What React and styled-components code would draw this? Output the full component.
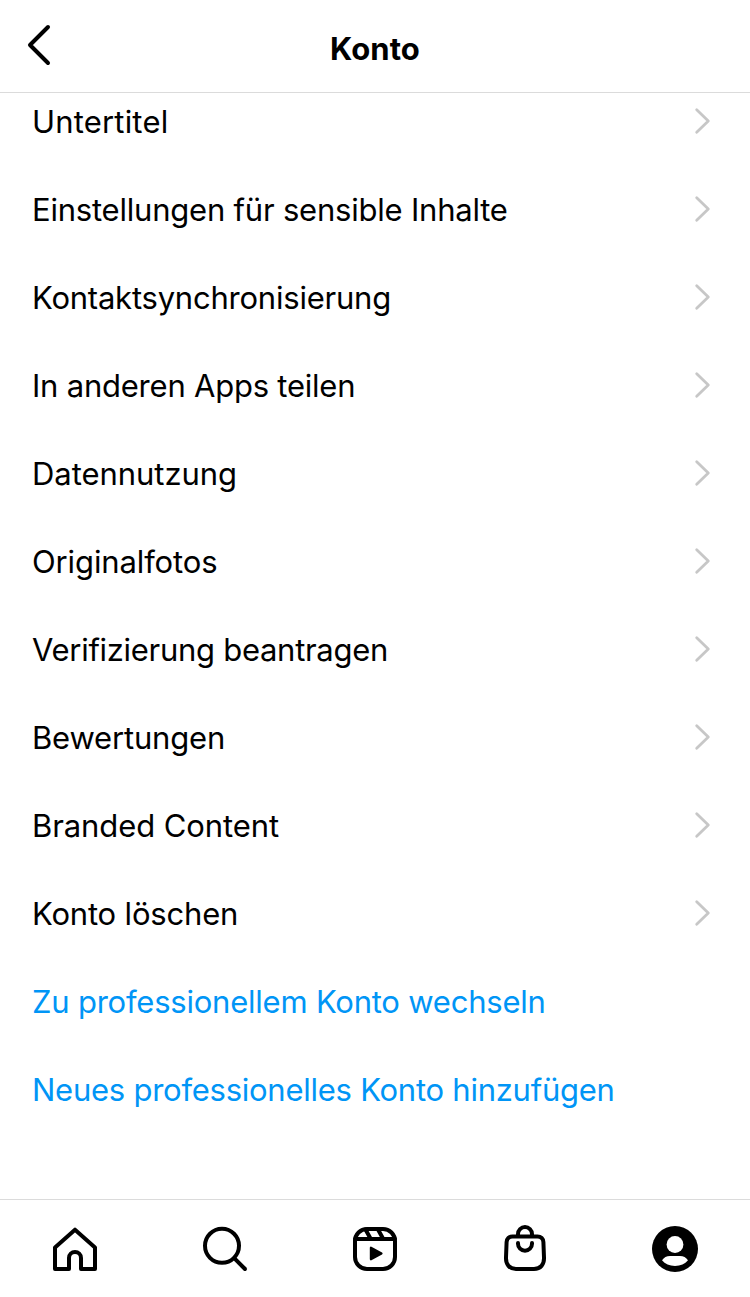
import React from 'react';
import styled, { createGlobalStyle } from 'styled-components';

const GlobalStyle = createGlobalStyle`
  body {
    margin: 0;
    background: #fff;
    color: #000;
    font-family: Inter, "Liberation Sans", sans-serif;
  }
`;

const Screen = styled.div`
  display: flex;
  flex-direction: column;
  height: 1297px;
  overflow: hidden;
  background: #fff;
`;

const Header = styled.header`
  display: grid;
  grid-template-columns: 80px 1fr 80px;
  flex: none;
  box-sizing: border-box;
  height: 93px;
  border-bottom: 1px solid #dbdbdb;
`;

const BackButton = styled.button`
  display: flex;
  align-items: flex-start;
  padding: 24px 0 0 27px;
  border: none;
  background: none;
  cursor: pointer;
`;

const Title = styled.h1`
  margin: 0;
  padding-top: 5px;
  font-size: 31px;
  font-weight: 700;
  line-height: 88px;
  letter-spacing: 0.1px;
  text-align: center;
`;

const Content = styled.main`
  flex: 1;
  min-height: 0;
  overflow: hidden;
`;

const List = styled.ul`
  margin: -16px 0 0;
  padding: 0;
  list-style: none;
`;

const Row = styled.li`
  display: flex;
  align-items: center;
  justify-content: space-between;
  box-sizing: border-box;
  height: 88px;
  padding: 0 39px 0 32px;
  color: ${(props) => (props.$link ? '#0095f6' : '#000')};
  cursor: pointer;
`;

const Label = styled.span`
  padding-top: 1px;
  font-size: 31px;
  line-height: 40px;
  letter-spacing: ${(props) => props.$spacing}px;
  white-space: nowrap;
`;

const TabBar = styled.nav`
  display: grid;
  grid-template-columns: repeat(5, 1fr);
  flex: none;
  box-sizing: border-box;
  height: 98px;
  border-top: 1px solid #dbdbdb;
`;

const Tab = styled.button`
  display: flex;
  justify-content: center;
  align-items: flex-start;
  padding: 25px 0 0;
  border: none;
  background: none;
  color: #000;
  cursor: pointer;
`;

const Icon = styled.svg`
  display: block;
  overflow: visible;
  fill: none;
  stroke: currentColor;
  stroke-width: 4;
  stroke-linecap: round;
  stroke-linejoin: round;
`;

const Chevron = styled(Icon)`
  stroke: #c7c7c7;
  stroke-width: 2.8;
`;

const items = [
  { label: 'Untertitel', spacing: 0.18 },
  { label: 'Einstellungen für sensible Inhalte', spacing: -0.21 },
  { label: 'Kontaktsynchronisierung', spacing: -0.22 },
  { label: 'In anderen Apps teilen', spacing: -0.22 },
  { label: 'Datennutzung', spacing: -0.05 },
  { label: 'Originalfotos', spacing: -0.12 },
  { label: 'Verifizierung beantragen', spacing: -0.29 },
  { label: 'Bewertungen', spacing: -0.18 },
  { label: 'Branded Content', spacing: -0.08 },
  { label: 'Konto löschen', spacing: -0.18 },
  { label: 'Zu professionellem Konto wechseln', spacing: -0.22, link: true },
  { label: 'Neues professionelles Konto hinzufügen', spacing: -0.25, link: true },
];

const HomeIcon = () => (
  <Icon width="48" height="48" viewBox="0 0 48 48">
    <path d="M4 44V22.5L24 4.7l20 17.8V44H30V33a6 6 0 0 0-12 0v11z" />
  </Icon>
);

const SearchIcon = () => (
  <Icon width="48" height="48" viewBox="0 0 48 48">
    <circle cx="21" cy="20.8" r="17" />
    <path d="M33.2 33.2 44 44" />
  </Icon>
);

const ReelsIcon = () => (
  <Icon width="48" height="48" viewBox="0 0 48 48">
    <rect x="4" y="4" width="40" height="40" rx="12" />
    <path d="M4 14h40M14.5 4.5l5 9M27 4.5l5 9" />
    <path d="M19.9 22.7v11.6l10.6-5.8z" fill="currentColor" strokeWidth="2.2" />
  </Icon>
);

const ShopIcon = () => (
  <Icon width="48" height="48" viewBox="0 0 48 48">
    <path d="M11.5 11.5h25c3.5 0 5.7 2.2 5.9 5.5l.6 15.5C43.3 39.5 39.5 44 33 44H15C8.5 44 4.7 39.5 5 32.5L5.6 17c.2-3.3 2.4-5.5 5.9-5.5z" />
    <path d="M17 10.5V9a7 7 0 0 1 14 0v1.5M17 18v.7a7 7 0 0 0 14 0V18" />
  </Icon>
);

const ProfileIcon = () => (
  <Icon width="48" height="48" viewBox="0 0 48 48">
    <g stroke="none">
      <circle cx="24" cy="24" r="23" fill="#000" />
      <circle cx="24" cy="19.5" r="8.4" fill="#fff" />
      <path d="M19 31h10c3.5 0 6 1.5 8 4.3C34 39 29.5 41 24 41s-10-2-13-5.7C13 32.5 15.5 31 19 31z" fill="#fff" />
    </g>
  </Icon>
);

const tabs = [
  { name: 'Startseite', icon: HomeIcon },
  { name: 'Suche', icon: SearchIcon },
  { name: 'Reels', icon: ReelsIcon },
  { name: 'Shop', icon: ShopIcon },
  { name: 'Profil', icon: ProfileIcon },
];

const App = () => {
  return (
    <Screen>
      <GlobalStyle />
      <Header>
        <BackButton aria-label="Zurück">
          <Icon width="24" height="42" viewBox="0 0 24 42">
            <path d="M21 3 3 21l18 18" />
          </Icon>
        </BackButton>
        <Title>Konto</Title>
      </Header>
      <Content>
        <List>
          {items.map((item) => (
            <Row key={item.label} $link={item.link}>
              <Label $spacing={item.spacing}>{item.label}</Label>
              {!item.link && (
                <Chevron width="16" height="26" viewBox="0 0 16 26">
                  <path d="M1.7 1.7 13.3 13 1.7 24.3" />
                </Chevron>
              )}
            </Row>
          ))}
        </List>
      </Content>
      <TabBar>
        {tabs.map(({ name, icon: TabIcon }) => (
          <Tab key={name} aria-label={name}>
            <TabIcon />
          </Tab>
        ))}
      </TabBar>
    </Screen>
  );
};

export default App;
